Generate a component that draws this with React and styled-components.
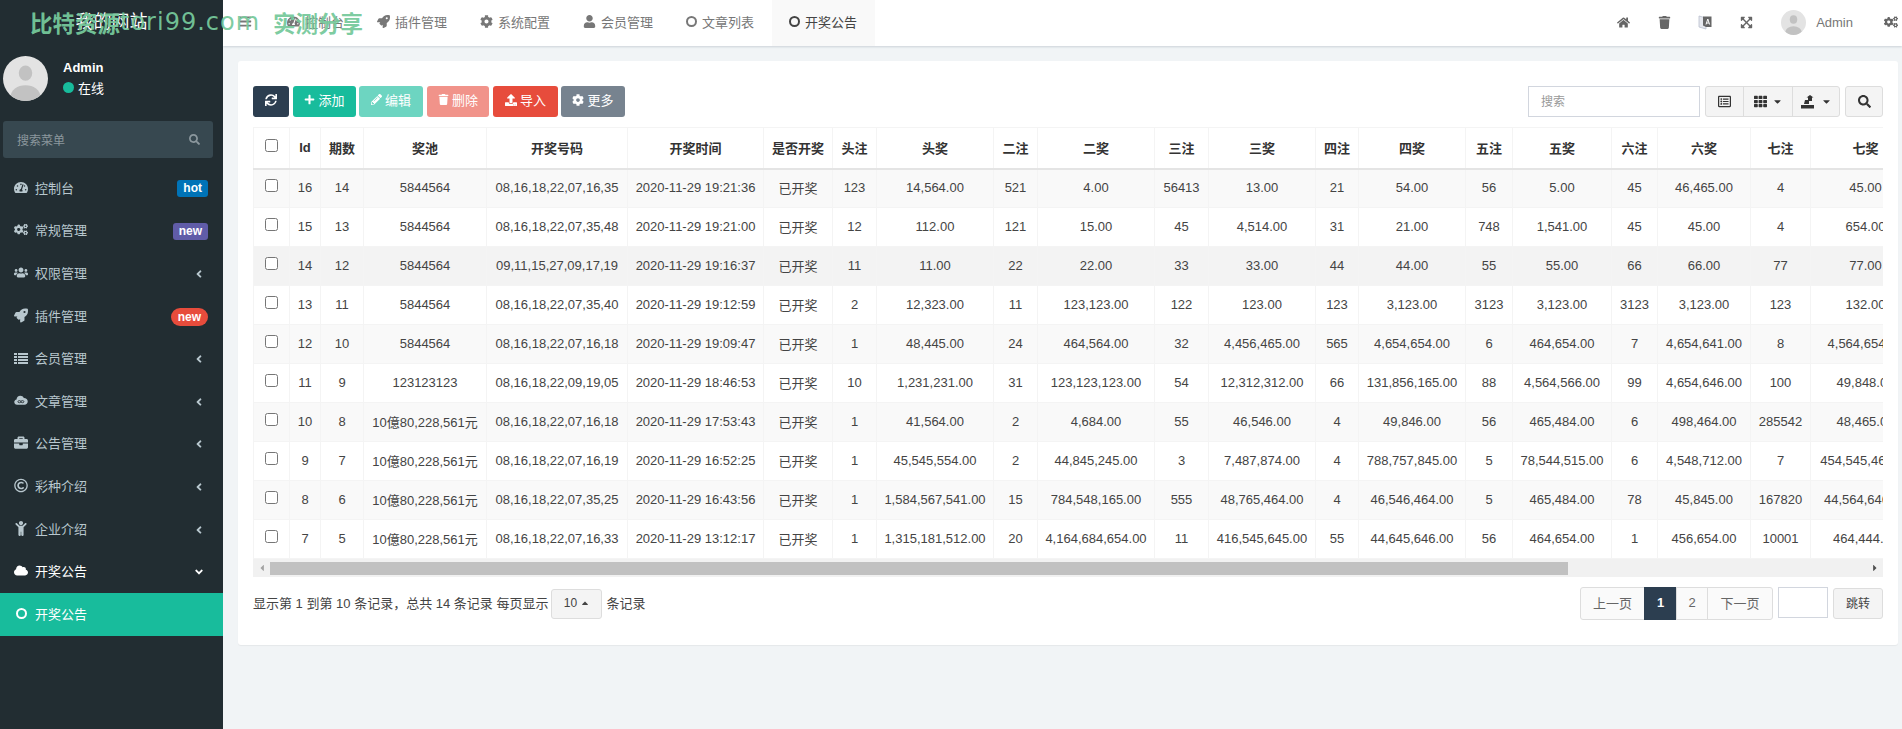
import React from "react";
import styled, { createGlobalStyle } from "styled-components";
import {
  FaAngleDown,
  FaAngleLeft,
  FaBars,
  FaBriefcase,
  FaCaretDown,
  FaCaretLeft,
  FaCaretRight,
  FaCaretUp,
  FaChild,
  FaCloud,
  FaCog,
  FaCogs,
  FaExpandArrowsAlt,
  FaHome,
  FaPencilAlt,
  FaPlus,
  FaRegCopyright,
  FaRegListAlt,
  FaRocket,
  FaSearch,
  FaSync,
  FaTachometerAlt,
  FaTh,
  FaTrash,
  FaUpload,
  FaUser,
  FaUsers,
} from "react-icons/fa";

const GlobalStyle = createGlobalStyle`
  html, body {
    margin: 0;
    padding: 0;
    height: 100%;
    overflow: hidden;
  }
  body {
    font-family: "Liberation Sans", "Noto Sans CJK SC", sans-serif;
    font-size: 13px;
    color: #444;
    background: #f1f4f6;
  }
  * {
    box-sizing: border-box;
  }
`;

const Page = styled.div`
  position: relative;
  display: flex;
  width: 1902px;
  height: 729px;
  overflow: hidden;
`;

const Watermark = styled.div`
  position: absolute;
  top: 6px;
  left: 30px;
  display: flex;
  align-items: center;
  height: 32px;
  color: rgba(118, 201, 155, 0.95);
  pointer-events: none;
  white-space: nowrap;
`;

const MarkCjk = styled.span`
  font-family: "Noto Sans CJK SC", sans-serif;
  font-weight: 700;
  font-size: 22.5px;
`;

const MarkLatin = styled.span`
  font-family: "DejaVu Sans", sans-serif;
  font-size: 24px;
  letter-spacing: 1px;
  margin-right: 13px;
`;

const Sidebar = styled.aside`
  width: 223px;
  flex: none;
  background: #222d32;
  color: #b8c7ce;
`;

const Logo = styled.div`
  height: 46px;
  line-height: 44px;
  text-align: center;
  font-size: 18px;
  color: #fff;
`;

const UserPanel = styled.div`
  display: flex;
  gap: 15px;
  padding: 10px 3px 0;
  height: 65px;
`;

const UserName = styled.div`
  font-weight: 700;
  color: #fff;
  margin-top: 4px;
`;

const UserStatus = styled.div`
  display: flex;
  align-items: center;
  gap: 4px;
  color: #fff;
  margin-top: 3px;
  font-size: 13px;
`;

const StatusDot = styled.span`
  width: 11px;
  height: 11px;
  border-radius: 50%;
  background: #18bc9c;
`;

const MenuSearch = styled.div`
  display: flex;
  align-items: center;
  justify-content: space-between;
  height: 37px;
  margin: 10px 10px 9px 3px;
  padding: 0 13px 0 14px;
  background: #374850;
  border-radius: 3px;
  color: #8b979d;
  font-size: 12px;
`;

const MenuItem = styled.div`
  display: flex;
  align-items: center;
  height: 42.6px;
  padding: 0 15px 2px 14px;
  color: ${(p) => (p.$active || p.$open ? "#fff" : "#b8c7ce")};
  background: ${(p) => (p.$active ? "#18bc9c" : "transparent")};
`;

const MenuIcon = styled.span`
  display: flex;
  justify-content: center;
  width: 14px;
  margin-right: 7px;
  font-size: 15px;
`;

const Badge = styled.span`
  margin-left: auto;
  margin-top: 3px;
  height: ${(p) => (p.$pill ? 18 : 17)}px;
  line-height: ${(p) => (p.$pill ? 18 : 17)}px;
  padding: 0 ${(p) => (p.$pill ? 7 : 6)}px;
  border-radius: ${(p) => (p.$pill ? 9 : 3)}px;
  background: ${(p) => p.$color};
  color: #fff;
  font-size: 12px;
  font-weight: 700;
`;

const MenuArrow = styled.span`
  display: flex;
  margin-left: auto;
  margin-top: 3px;
  margin-right: 3px;
  font-size: 12px;
`;

const Ring = styled.span`
  display: block;
  flex: none;
  width: 11px;
  height: 11px;
  border: 2px solid currentColor;
  border-radius: 50%;
`;

const Main = styled.main`
  flex: 1;
  min-width: 0;
  display: flex;
  flex-direction: column;
`;

const Topbar = styled.header`
  display: flex;
  align-items: stretch;
  height: 46px;
  background: #fff;
  box-shadow: 0 1px 2px rgba(60, 80, 100, 0.2);
`;

const TopItem = styled.div`
  display: flex;
  align-items: center;
  gap: 5px;
  width: ${(p) => p.$w}px;
  padding-left: ${(p) => p.$pad || 17}px;
  padding-bottom: 4px;
  color: ${(p) => (p.$active ? "#444" : "#777")};
  background: ${(p) => (p.$active ? "#f9f9f9" : "transparent")};
  font-size: 13px;
`;

const TopRight = styled.div`
  display: flex;
  align-items: center;
  margin-left: auto;
  padding-bottom: 2px;
  color: #666;
`;

const TopIcon = styled.span`
  display: flex;
  justify-content: center;
  width: 41px;
  font-size: 13px;
`;

const TopUser = styled.div`
  display: flex;
  align-items: center;
  gap: 10px;
  margin: 0 31px 0 14px;
  color: #777;
`;

const TopGear = styled.span`
  display: flex;
  margin-right: 4px;
  font-size: 14px;
`;

const Content = styled.div`
  padding: 15px 4px 0 15px;
`;

const Panel = styled.section`
  height: 584px;
  padding: 25px 15px 0;
  background: #fff;
  border-radius: 3px;
  box-shadow: 0 1px 1px rgba(0, 0, 0, 0.05);
`;

const Toolbar = styled.div`
  display: flex;
  align-items: center;
  height: 31px;
  margin-bottom: 10px;
`;

const ActionButton = styled.button`
  display: flex;
  align-items: center;
  justify-content: center;
  gap: 3px;
  width: ${(p) => p.$w}px;
  height: 31px;
  margin-right: ${(p) => p.$gap ?? 4}px;
  padding: 0 0 4px;
  border: 0;
  border-radius: 3px;
  background: ${(p) => p.$color};
  color: #fff;
  font: inherit;
  font-size: 13px;
`;

const SearchInput = styled.input`
  width: 172px;
  height: 31px;
  margin-left: auto;
  margin-right: 5px;
  padding: 0 12px;
  border: 1px solid #d2d6de;
  outline: none;
  font: inherit;
  font-size: 12px;
  &::placeholder {
    color: #999;
  }
`;

const ToolGroup = styled.div`
  display: flex;
  height: 31px;
  margin-right: ${(p) => p.$gap ?? 5}px;
  border: 1px solid #ddd;
  border-radius: 3px;
  background: #f4f4f4;
  color: #333;
`;

const ToolCell = styled.div`
  display: flex;
  align-items: center;
  justify-content: center;
  gap: 5px;
  width: ${(p) => p.$w}px;
  font-size: 13px;
  & + & {
    border-left: 1px solid #ddd;
  }
`;

const TableWrap = styled.div`
  width: 1630px;
  overflow: hidden;
`;

const Table = styled.table`
  width: 1667px;
  table-layout: fixed;
  border-collapse: collapse;
  color: #444;
`;

const Col = styled.col`
  width: ${(p) => p.$w}px;
`;

const Th = styled.th`
  height: 41px;
  padding: 0;
  border: 1px solid #f4f4f4;
  border-bottom: 2px solid #e4e4e4;
  color: #333;
  font-size: 13px;
  font-weight: 700;
  text-align: center;
`;

const Td = styled.td`
  height: 39px;
  padding: 0 0 2px;
  border: 1px solid #f4f4f4;
  text-align: center;
  white-space: nowrap;
  overflow: ${(p) => (p.$clip ? "hidden" : "visible")};
`;

const Row = styled.tr`
  background: ${(p) => (p.$hover ? "#f3f3f3" : p.$striped ? "#f9f9f9" : "#fff")};
`;

const Check = styled.input.attrs({ type: "checkbox" })`
  display: block;
  width: 13px;
  height: 13px;
  margin: 0 auto 4px;
`;

const HScroll = styled.div`
  display: flex;
  align-items: center;
  width: 1630px;
  height: 18px;
  background: #f1f1f1;
  color: #505050;
`;

const ScrollArrow = styled.span`
  display: flex;
  justify-content: center;
  width: 17px;
  flex: none;
  font-size: 10px;
  color: ${(p) => (p.$dim ? "#a3a3a3" : "#505050")};
`;

const ScrollThumb = styled.div`
  width: 1298px;
  height: 13px;
  background: #c1c1c1;
`;

const ScrollSpacer = styled.div`
  flex: 1;
`;

const Footer = styled.div`
  display: flex;
  align-items: flex-start;
  justify-content: space-between;
  margin-top: 10px;
`;

const PageInfo = styled.div`
  display: flex;
  align-items: center;
  height: 30px;
  margin-top: 2px;
  white-space: nowrap;
`;

const InfoText = styled.span`
  margin-bottom: 4px;
`;

const SizeButton = styled.div`
  display: flex;
  align-items: center;
  justify-content: center;
  gap: 3px;
  width: 51px;
  height: 30px;
  margin: 0 4px 0 3px;
  padding-bottom: 2px;
  border: 1px solid #ddd;
  border-radius: 3px;
  background: #f4f4f4;
  font-size: 12px;
`;

const Pager = styled.div`
  display: flex;
  align-items: flex-start;
`;

const PageLink = styled.div`
  display: flex;
  align-items: center;
  justify-content: center;
  width: ${(p) => p.$w}px;
  height: 33px;
  margin-left: -1px;
  padding-bottom: 3px;
  border: 1px solid ${(p) => (p.$active ? "#2c3e50" : "#ddd")};
  border-radius: ${(p) => p.$round || 0};
  background: ${(p) => (p.$active ? "#2c3e50" : "#fafafa")};
  color: ${(p) => (p.$active ? "#fff" : "#666")};
  font-weight: ${(p) => (p.$active ? 700 : 400)};
`;

const JumpInput = styled.input`
  width: 50px;
  height: 31px;
  margin-left: 5px;
  border: 1px solid #d2d6de;
  outline: none;
`;

const JumpButton = styled.button`
  width: 50px;
  height: 31px;
  margin: 1px 0 0 5px;
  padding: 0 0 3px;
  border: 1px solid #ddd;
  border-radius: 3px;
  background: #f4f4f4;
  color: #444;
  font: inherit;
  font-size: 12px;
`;

const AvatarSvg = styled.svg`
  flex: none;
`;

function Avatar({ size }) {
  return (
    <AvatarSvg width={size} height={size} viewBox="0 0 100 100">
      <defs>
        <clipPath id={`face-${size}`}>
          <circle cx="50" cy="50" r="50" />
        </clipPath>
      </defs>
      <g clipPath={`url(#face-${size})`}>
        <rect width="100" height="100" fill="#e3e3e3" />
        <ellipse cx="50" cy="38" rx="15" ry="17" fill="#c2c2c2" />
        <ellipse cx="50" cy="90" rx="33" ry="25" fill="#c2c2c2" />
      </g>
    </AvatarSvg>
  );
}

function ExportIcon() {
  return (
    <svg width="16" height="16" viewBox="0 0 16 16" fill="currentColor">
      <rect x="1" y="11" width="13" height="3.5" />
      <path d="M4 10 L5 6 H8 V3.5 H6.5 L10 1 L13.5 3.5 H12 V7 H9 V10 Z" />
    </svg>
  );
}

function StripesIcon() {
  return (
    <svg width="14" height="14" viewBox="0 0 14 14" fill="currentColor">
      <rect x="0" y="2" width="3" height="2" />
      <rect x="0" y="5" width="3" height="2" />
      <rect x="0" y="8" width="3" height="2" />
      <rect x="0" y="11" width="3" height="2" />
      <rect x="4" y="2" width="10" height="2" />
      <rect x="4" y="5" width="10" height="2" />
      <rect x="4" y="8" width="10" height="2" />
      <rect x="4" y="11" width="10" height="2" />
    </svg>
  );
}

function LinkCloudIcon() {
  return (
    <svg width="16" height="14" viewBox="0 0 16 14">
      <path
        fill="currentColor"
        d="M3.5 12.5C1.6 12.5 .3 11.2 .3 9.4 .3 7.8 1.4 6.6 2.9 6.3 3 4 4.8 2.2 7.2 2.2 9 2.2 10.5 3.2 11.2 4.8 13.6 4.7 15.7 6.4 15.7 8.8 15.7 11 14 12.5 12 12.5Z"
      />
      <ellipse cx="6.2" cy="8.9" rx="1.7" ry="1.2" fill="none" stroke="#222d32" />
      <ellipse cx="9.6" cy="8.9" rx="1.7" ry="1.2" fill="none" stroke="#222d32" />
    </svg>
  );
}

function LanguageIcon() {
  return (
    <svg width="15" height="15" viewBox="0 0 15 15">
      <path d="M1 1 L8 3 V14 L1 12 Z" fill="#e6e8ee" stroke="#b9bfce" strokeWidth=".8" />
      <path d="M5 1.5 H13.5 V12 H8 L5 10.5 Z" fill="#666" />
      <path d="M8 9.5 L9.8 4 L11.6 9.5 M8.7 8 H10.9" fill="none" stroke="#fff" strokeWidth="1" />
    </svg>
  );
}

const menu = [
  { icon: <FaTachometerAlt />, label: "控制台", badge: "hot", color: "#0073b7" },
  { icon: <FaCogs />, label: "常规管理", badge: "new", color: "#605ca8" },
  { icon: <FaUsers />, label: "权限管理", arrow: true },
  { icon: <FaRocket />, label: "插件管理", badge: "new", color: "#e74c3c", pill: true },
  { icon: <StripesIcon />, label: "会员管理", arrow: true },
  { icon: <LinkCloudIcon />, label: "文章管理", arrow: true },
  { icon: <FaBriefcase />, label: "公告管理", arrow: true },
  { icon: <FaRegCopyright />, label: "彩种介绍", arrow: true },
  { icon: <FaChild />, label: "企业介绍", arrow: true },
  { icon: <FaCloud />, label: "开奖公告", open: true },
  { icon: <Ring />, label: "开奖公告", active: true },
];

const tabs = [
  { icon: <FaTachometerAlt />, label: "控制台", w: 90 },
  { icon: <FaRocket />, label: "插件管理", w: 103 },
  { icon: <FaCog />, label: "系统配置", w: 103 },
  { icon: <FaUser />, label: "会员管理", w: 103 },
  { icon: <Ring />, label: "文章列表", w: 103 },
  { icon: <Ring />, label: "开奖公告", w: 103, active: true },
];

const columns = [
  ["Id", 31],
  ["期数", 43],
  ["奖池", 123],
  ["开奖号码", 141],
  ["开奖时间", 136],
  ["是否开奖", 69],
  ["头注", 44],
  ["头奖", 117],
  ["二注", 44],
  ["二奖", 117],
  ["三注", 54],
  ["三奖", 107],
  ["四注", 43],
  ["四奖", 107],
  ["五注", 47],
  ["五奖", 99],
  ["六注", 46],
  ["六奖", 93],
  ["七注", 60],
  ["七奖", 110],
];

const BIG = "10億80,228,561元";

const rows = [
  ["16", "14", "5844564", "08,16,18,22,07,16,35", "2020-11-29 19:21:36", "已开奖", "123", "14,564.00", "521", "4.00", "56413", "13.00", "21", "54.00", "56", "5.00", "45", "46,465.00", "4", "45.00"],
  ["15", "13", "5844564", "08,16,18,22,07,35,48", "2020-11-29 19:21:00", "已开奖", "12", "112.00", "121", "15.00", "45", "4,514.00", "31", "21.00", "748", "1,541.00", "45", "45.00", "4", "654.00"],
  ["14", "12", "5844564", "09,11,15,27,09,17,19", "2020-11-29 19:16:37", "已开奖", "11", "11.00", "22", "22.00", "33", "33.00", "44", "44.00", "55", "55.00", "66", "66.00", "77", "77.00"],
  ["13", "11", "5844564", "08,16,18,22,07,35,40", "2020-11-29 19:12:59", "已开奖", "2", "12,323.00", "11", "123,123.00", "122", "123.00", "123", "3,123.00", "3123", "3,123.00", "3123", "3,123.00", "123", "132.00"],
  ["12", "10", "5844564", "08,16,18,22,07,16,18", "2020-11-29 19:09:47", "已开奖", "1", "48,445.00", "24", "464,564.00", "32", "4,456,465.00", "565", "4,654,654.00", "6", "464,654.00", "7", "4,654,641.00", "8", "4,564,654.00"],
  ["11", "9", "123123123", "08,16,18,22,09,19,05", "2020-11-29 18:46:53", "已开奖", "10", "1,231,231.00", "31", "123,123,123.00", "54", "12,312,312.00", "66", "131,856,165.00", "88", "4,564,566.00", "99", "4,654,646.00", "100", "49,848.00"],
  ["10", "8", BIG, "08,16,18,22,07,16,18", "2020-11-29 17:53:43", "已开奖", "1", "41,564.00", "2", "4,684.00", "55", "46,546.00", "4", "49,846.00", "56", "465,484.00", "6", "498,464.00", "285542", "48,465.00"],
  ["9", "7", BIG, "08,16,18,22,07,16,19", "2020-11-29 16:52:25", "已开奖", "1", "45,545,554.00", "2", "44,845,245.00", "3", "7,487,874.00", "4", "788,757,845.00", "5", "78,544,515.00", "6", "4,548,712.00", "7", "454,545,465.00"],
  ["8", "6", BIG, "08,16,18,22,07,35,25", "2020-11-29 16:43:56", "已开奖", "1", "1,584,567,541.00", "15", "784,548,165.00", "555", "48,765,464.00", "4", "46,546,464.00", "5", "465,484.00", "78", "45,845.00", "167820", "44,564,646.00"],
  ["7", "5", BIG, "08,16,18,22,07,16,33", "2020-11-29 13:12:17", "已开奖", "1", "1,315,181,512.00", "20", "4,164,684,654.00", "11", "416,545,645.00", "55", "44,645,646.00", "56", "464,654.00", "1", "456,654.00", "10001", "464,444.00"],
];

export default function App() {
  return (
    <Page>
      <GlobalStyle />
      <Sidebar>
        <Logo>我的网站</Logo>
        <UserPanel>
          <Avatar size={45} />
          <div>
            <UserName>Admin</UserName>
            <UserStatus>
              <StatusDot />
              在线
            </UserStatus>
          </div>
        </UserPanel>
        <MenuSearch>
          搜索菜单
          <FaSearch size={11} />
        </MenuSearch>
        {menu.map((item, i) => (
          <MenuItem key={i} $active={item.active} $open={item.open}>
            <MenuIcon>{item.icon}</MenuIcon>
            {item.label}
            {item.badge && (
              <Badge $color={item.color} $pill={item.pill}>
                {item.badge}
              </Badge>
            )}
            {item.arrow && (
              <MenuArrow>
                <FaAngleLeft />
              </MenuArrow>
            )}
            {item.open && (
              <MenuArrow>
                <FaAngleDown />
              </MenuArrow>
            )}
          </MenuItem>
        ))}
      </Sidebar>
      <Main>
        <Topbar>
          <TopItem $w={47} $pad={16}>
            <FaBars size={13} />
          </TopItem>
          {tabs.map((tab) => (
            <TopItem key={tab.label} $w={tab.w} $active={tab.active}>
              {tab.icon}
              {tab.label}
            </TopItem>
          ))}
          <TopRight>
            <TopIcon>
              <FaHome />
            </TopIcon>
            <TopIcon>
              <FaTrash />
            </TopIcon>
            <TopIcon>
              <LanguageIcon />
            </TopIcon>
            <TopIcon>
              <FaExpandArrowsAlt />
            </TopIcon>
            <TopUser>
              <Avatar size={25} />
              Admin
            </TopUser>
            <TopGear>
              <FaCogs />
            </TopGear>
          </TopRight>
        </Topbar>
        <Content>
          <Panel>
            <Toolbar>
              <ActionButton $w={36} $color="#2c3e50">
                <FaSync size={12} />
              </ActionButton>
              <ActionButton $w={63} $gap={3} $color="#18bc9c">
                <FaPlus size={11} />
                添加
              </ActionButton>
              <ActionButton $w={64} $color="#6dd5c1">
                <FaPencilAlt size={11} />
                编辑
              </ActionButton>
              <ActionButton $w={62} $color="#f1938a">
                <FaTrash size={11} />
                删除
              </ActionButton>
              <ActionButton $w={65} $gap={3} $color="#e74c3c">
                <FaUpload size={12} />
                导入
              </ActionButton>
              <ActionButton $w={64} $gap={0} $color="#77838f">
                <FaCog size={12} />
                更多
              </ActionButton>
              <SearchInput placeholder="搜索" />
              <ToolGroup>
                <ToolCell $w={37}>
                  <FaRegListAlt />
                </ToolCell>
                <ToolCell $w={49}>
                  <FaTh />
                  <FaCaretDown size={11} />
                </ToolCell>
                <ToolCell $w={47}>
                  <ExportIcon />
                  <FaCaretDown size={11} />
                </ToolCell>
              </ToolGroup>
              <ToolGroup $gap={0}>
                <ToolCell $w={36}>
                  <FaSearch />
                </ToolCell>
              </ToolGroup>
            </Toolbar>
            <TableWrap>
              <Table>
                <colgroup>
                  <Col $w={36} />
                  {columns.map(([label, w]) => (
                    <Col key={label} $w={w} />
                  ))}
                </colgroup>
                <thead>
                  <tr>
                    <Th>
                      <Check />
                    </Th>
                    {columns.map(([label]) => (
                      <Th key={label}>{label}</Th>
                    ))}
                  </tr>
                </thead>
                <tbody>
                  {rows.map((row, i) => (
                    <Row key={row[0]} $striped={i % 2 === 0} $hover={i === 2}>
                      <Td>
                        <Check />
                      </Td>
                      {row.map((value, j) => (
                        <Td key={j} $clip={j === row.length - 1}>
                          {value}
                        </Td>
                      ))}
                    </Row>
                  ))}
                </tbody>
              </Table>
            </TableWrap>
            <HScroll>
              <ScrollArrow $dim>
                <FaCaretLeft />
              </ScrollArrow>
              <ScrollThumb />
              <ScrollSpacer />
              <ScrollArrow>
                <FaCaretRight />
              </ScrollArrow>
            </HScroll>
            <Footer>
              <PageInfo>
                <InfoText>显示第 1 到第 10 条记录，总共 14 条记录 每页显示</InfoText>
                <SizeButton>
                  10
                  <FaCaretUp size={10} />
                </SizeButton>
                <InfoText>条记录</InfoText>
              </PageInfo>
              <Pager>
                <PageLink $w={65} $round="3px 0 0 3px">
                  上一页
                </PageLink>
                <PageLink $w={33} $active>
                  1
                </PageLink>
                <PageLink $w={32}>2</PageLink>
                <PageLink $w={66} $round="0 3px 3px 0">
                  下一页
                </PageLink>
                <JumpInput />
                <JumpButton>跳转</JumpButton>
              </Pager>
            </Footer>
          </Panel>
        </Content>
      </Main>
      <Watermark>
        <MarkCjk>比特资源</MarkCjk>
        <MarkLatin>tori99.com</MarkLatin>
        <MarkCjk>实测分享</MarkCjk>
      </Watermark>
    </Page>
  );
}
